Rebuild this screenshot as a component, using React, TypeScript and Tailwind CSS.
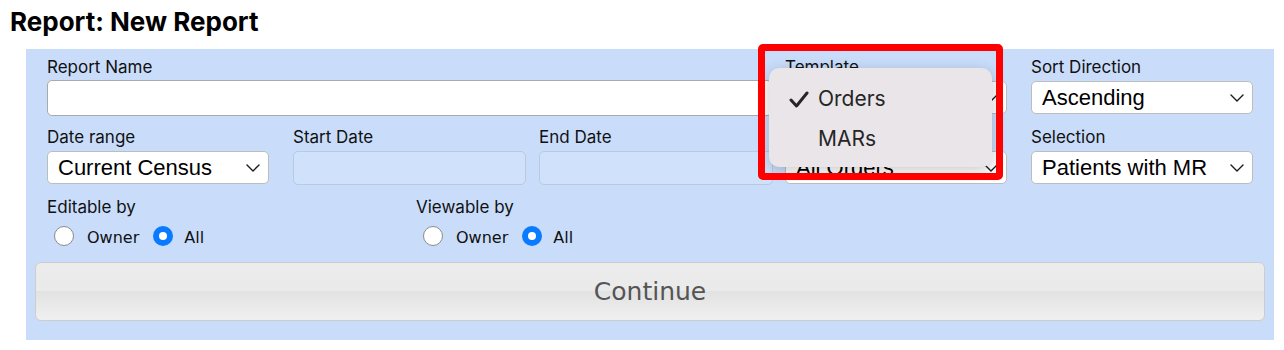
import React from "react";

const Chevron = () => (
  <svg width="14" height="8" viewBox="0 0 14 8" fill="none" stroke="#1a1a1a" strokeWidth="1.4" strokeLinecap="round" strokeLinejoin="round">
    <path d="M1 1l6 6 6-6" />
  </svg>
);

const Label = ({ children, h = "h-[23px]" }: { children: React.ReactNode; h?: string }) => (
  <div className={`${h} text-[17px] leading-[20px] text-[#111] font-['Inter',sans-serif] whitespace-nowrap`}>{children}</div>
);

const Select = ({ value, className = "" }: { value: string; className?: string }) => (
  <div
    className={`flex h-[33px] w-[222px] items-center justify-between overflow-hidden rounded-[5px] border border-[#bdbdbd] bg-white pl-[10px] pr-[8px] font-['Liberation_Sans',Arial,sans-serif] text-[22px] leading-none text-black ${className}`}
  >
    <span className="whitespace-nowrap">{value}</span>
    <Chevron />
  </div>
);

const Radio = ({ checked }: { checked?: boolean }) =>
  checked ? (
    <span className="flex h-[20px] w-[20px] items-center justify-center rounded-full bg-[#0a7aff]">
      <span className="h-[8px] w-[8px] rounded-full bg-white" />
    </span>
  ) : (
    <span className="h-[20px] w-[20px] rounded-full border border-[#8a8a8a] bg-white" />
  );

const RadioGroup = ({ label }: { label: string }) => (
  <div>
    <Label h="h-[21px]">{label}</Label>
    <div className="mt-[8px] flex h-[24px] items-start pl-[7px] font-['DejaVu_Sans',sans-serif] text-[16px] leading-[24px] text-[#111]">
      <Radio />
      <span className="ml-[13px]">Owner</span>
      <span className="ml-[14px]">
        <Radio checked />
      </span>
      <span className="ml-[11px]">All</span>
    </div>
  </div>
);

export default function App() {
  return (
    <div className="relative h-[350px] w-[1284px] bg-white">
      <div className="h-[49px] pl-[10px] pt-[9px] font-['Inter',sans-serif] text-[26px] font-bold leading-[26px] text-black">
        Report: New Report
      </div>

      <div className="ml-[26px] w-[1248px] bg-[#c9ddfb] pb-[19px] pl-[21px] pr-[8px] pt-[8px]">
        {/* row 1 */}
        <div className="grid grid-cols-[repeat(5,233px)] gap-x-[13px]">
          <div className="col-span-3">
            <Label h="h-[23px]">Report Name</Label>
            <div className="h-[36px] w-full rounded-[5px] border border-[#aaaaaa] bg-white" />
          </div>
          <div>
            <Label h="h-[23px]">Template</Label>
            <Select value="Orders" className="mt-px" />
          </div>
          <div>
            <Label h="h-[23px]">Sort Direction</Label>
            <Select value="Ascending" className="mt-px" />
          </div>
        </div>

        {/* row 2 */}
        <div className="mt-[11px] grid grid-cols-[repeat(5,233px)] gap-x-[13px]">
          <div>
            <Label h="h-[24px]">Date range</Label>
            <Select value="Current Census" className="w-[220px]" />
          </div>
          <div>
            <Label h="h-[24px]">Start Date</Label>
            <div className="h-[34px] w-[233px] rounded-[5px] border border-[#b8c9e2] bg-[#d0e2fb]" />
          </div>
          <div>
            <Label h="h-[24px]">End Date</Label>
            <div className="h-[34px] w-[234px] rounded-[5px] border border-[#b8c9e2] bg-[#d0e2fb]" />
          </div>
          <div>
            <Label h="h-[24px]">Type</Label>
            <Select value="All Orders" />
          </div>
          <div>
            <Label h="h-[24px]">Selection</Label>
            <Select value="Patients with MR" />
          </div>
        </div>

        {/* row 3 */}
        <div className="mt-[12px] flex">
          <div className="w-[369px]">
            <RadioGroup label="Editable by" />
          </div>
          <RadioGroup label="Viewable by" />
        </div>

        <button className="ml-[-12px] mt-[12px] flex h-[59px] w-[1230px] items-center justify-center rounded-[6px] border border-[#cdcdcd] bg-[linear-gradient(to_bottom,#ececec_0%,#eaeaea_50%,#e2e2e2_50%,#f0f0f0_100%)] pt-[1px] font-['DejaVu_Sans',sans-serif] text-[25px] text-[#555]">
          Continue
        </button>
      </div>

      {/* open template menu */}
      <div className="absolute left-[769px] top-[68px] h-[99px] w-[223px] rounded-[10px] bg-[#e9e5e9] pt-[11px] font-['Inter',sans-serif] text-[21px] text-[#262626] shadow-[0_3px_14px_rgba(0,0,0,0.22)]">
        <div className="flex h-[40px] items-center">
          <svg className="ml-[20px]" width="20" height="17" viewBox="0 0 20 17" fill="none" stroke="#262626" strokeWidth="3" strokeLinecap="round" strokeLinejoin="round">
            <path d="M2 9l5.5 6L18 2" />
          </svg>
          <span className="ml-[9px]">Orders</span>
        </div>
        <div className="flex h-[40px] items-center pl-[49px]">MARs</div>
      </div>
      <div className="pointer-events-none absolute left-[758px] top-[44px] h-[136px] w-[245px] rounded-[5px] border-[7px] border-[#ff0000]" />
    </div>
  );
}
